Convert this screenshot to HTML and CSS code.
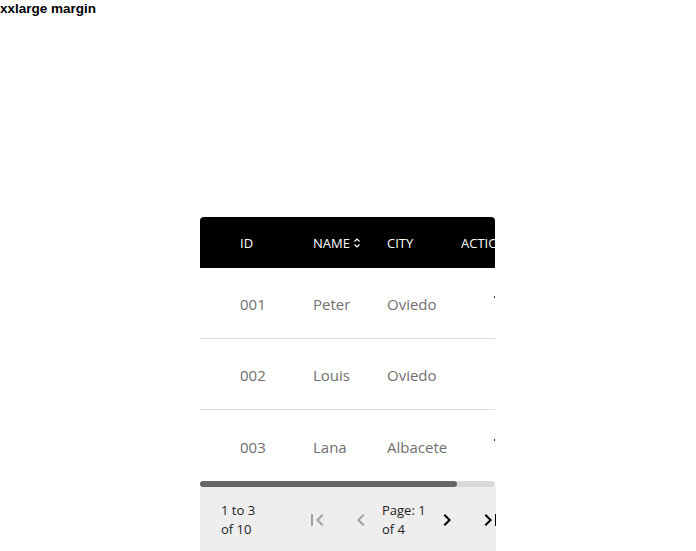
FILE: index.html
```html
<!DOCTYPE html>
<html>
<head>
<meta charset="utf-8">
<link rel="stylesheet" href="styles.css">
</head>
<body>
<div class="title">xxlarge margin</div>
<div class="frame">
  <div class="scroll">
    <table class="grid">
      <colgroup>
        <col class="c1"><col class="c2"><col class="c3"><col class="c4">
      </colgroup>
      <thead>
        <tr>
          <th class="first">ID</th>
          <th><span class="sort">NAME<svg class="sort-icon" width="8" height="12" viewBox="0 0 8 12"><polyline points="1.5,4.5 4,2 6.5,4.5" fill="none" stroke="#fff" stroke-width="1.2"/><polyline points="1.5,7.5 4,10 6.5,7.5" fill="none" stroke="#fff" stroke-width="1.2"/></svg></span></th>
          <th>CITY</th>
          <th>ACTIONS</th>
        </tr>
      </thead>
      <tbody>
        <tr>
          <td class="first">001</td><td>Peter</td><td>Oviedo</td>
          <td><span class="act"><span class="mark"></span></span></td>
        </tr>
        <tr>
          <td class="first">002</td><td>Louis</td><td>Oviedo</td>
          <td></td>
        </tr>
        <tr class="last">
          <td class="first">003</td><td>Lana</td><td>Albacete</td>
          <td><span class="act"><span class="mark"></span></span></td>
        </tr>
      </tbody>
    </table>
  </div>
  <div class="track"><div class="thumb"></div></div>
  <div class="footer">
    <div class="range"><span>1 to 3 of 10</span></div>
    <button class="btn off" aria-label="First page"><svg width="24" height="24" viewBox="0 0 24 24"><path d="M18.41 16.59L13.82 12l4.59-4.59L17 6l-6 6 6 6zM6 6h2v12H6z"/></svg></button>
    <button class="btn off gap" aria-label="Previous page"><svg width="24" height="24" viewBox="0 0 24 24"><path d="M15.41 7.41L14 6l-6 6 6 6 1.41-1.41L10.83 12z"/></svg></button>
    <div class="page">Page: 1 of 4</div>
    <button class="btn" aria-label="Next page"><svg width="24" height="24" viewBox="0 0 24 24"><path d="M10 6L8.59 7.41 13.17 12l-4.58 4.59L10 18l6-6z"/></svg></button>
    <button class="btn gap" aria-label="Last page"><svg width="24" height="24" viewBox="0 0 24 24"><path d="M5.59 7.41L10.18 12l-4.59 4.59L7 18l6-6-6-6zM16 6h2v12h-2z"/></svg></button>
  </div>
</div>
</body>
</html>
```

FILE: styles.css
```css
html, body {
  margin: 0;
  padding: 0;
  background: #fff;
  overflow: hidden;
}
body {
  width: 696px;
  height: 551px;
  font-family: "Open Sans", "Liberation Sans", sans-serif;
}
.title {
  font-family: "Liberation Sans", Arial, sans-serif;
  font-weight: bold;
  font-size: 13.5px;
  line-height: 18px;
  color: #000;
}
.frame {
  margin: 199px 0 0 200px;
  width: 296px;
}
.scroll {
  width: 295px;
  overflow: hidden;
  border-radius: 4px 4px 0 0;
}
.grid {
  table-layout: fixed;
  width: 339px;
  border-collapse: collapse;
  border-spacing: 0;
}
.c1 { width: 113px; }
.c2 { width: 74px; }
.c3 { width: 74px; }
.c4 { width: 78px; }
.grid th {
  background: #000;
  color: #fff;
  font-weight: 400;
  font-size: 13px;
  text-align: left;
  height: 51px;
  padding: 0;
  white-space: nowrap;
  overflow: hidden;
}
.grid th.first, .grid td.first {
  padding-left: 40px;
}
.sort {
  display: inline-flex;
  align-items: center;
  gap: 3px;
}
.grid td {
  height: 68px;
  padding: 2px 0 0 0;
  font-size: 15px;
  color: #707070;
  border-bottom: 1px solid #dcdcdc;
  white-space: nowrap;
}
.grid tr.last td {
  border-bottom: none;
  height: 69px;
}
.act {
  display: block;
  margin-left: 33px;
  height: 16px;
}
.mark {
  display: block;
  width: 2px;
  height: 2px;
  background: #333;
}
.track {
  width: 295px;
  height: 6px;
  background: #d9d9d9;
  border-radius: 3px;
}
.thumb {
  width: 257px;
  height: 6px;
  background: #666;
  border-radius: 3px;
}
.footer {
  height: 67px;
  width: 296px;
  background: #eeeeee;
  display: flex;
  align-items: center;
  overflow: hidden;
  box-sizing: border-box;
  padding-left: 21px;
  padding-bottom: 1px;
  font-size: 13px;
  color: #222;
}
.range {
  width: 84px;
  flex: none;
  line-height: 19px;
}
.range span {
  display: block;
  width: 48px;
}
.btn {
  flex: none;
  width: 24px;
  height: 24px;
  padding: 0;
  border: none;
  background: none;
  display: flex;
}
.btn svg { fill: #000; }
.btn.off svg { fill: #a0a0a0; }
.btn.gap { margin-left: 20px; }
.page {
  flex: none;
  width: 53px;
  margin-left: 9px;
  line-height: 19px;
}
```
